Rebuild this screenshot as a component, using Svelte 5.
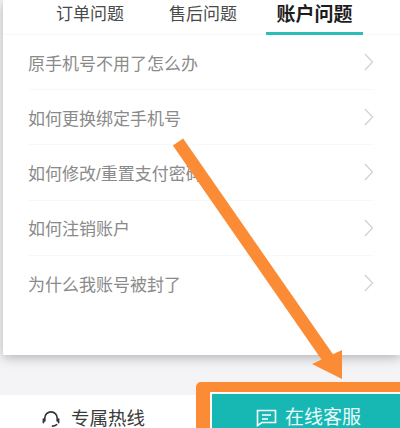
<script>
  const tabs = ['订单问题', '售后问题', '账户问题'];
  const rows = ['原手机号不用了怎么办', '如何更换绑定手机号', '如何修改/重置支付密码', '如何注销账户', '为什么我账号被封了'];
</script>

<div class="page">
  <div class="card">
    <div class="tabs">
      {#each tabs as t, i}
        <div class="tab" class:active={i === 2}>{t}</div>
      {/each}
    </div>
    {#each rows as r}
      <div class="row">
        <span>{r}</span>
        <svg width="10" height="18" viewBox="0 0 10 18"><path d="M1 1l7.500 8L1 17" fill="none" stroke="#d2d2d2" stroke-width="1.300"/></svg>
      </div>
    {/each}
  </div>
  <div class="bar">
    <div class="hotline">
      <svg width="20" height="18" viewBox="0 0 21 18"><path d="M4 11V8a6.500 6.500 0 0 1 13 0v3M2.500 9v4M18.500 9v4M16.500 15q-2 1.500-4.500 1.500" fill="none" stroke="#333" stroke-width="1.700" stroke-linecap="round"/></svg>
      <span>专属热线</span>
    </div>
    <div class="highlight">
      <div class="online">
        <svg width="21" height="18" viewBox="0 0 21 18"><path d="M1.500 1.500h18v12H6l-4.500 3zM6 6h9M6 10h6" fill="none" stroke="#fff" stroke-width="1.600"/></svg>
        <span>在线客服</span>
      </div>
    </div>
  </div>
  <svg class="arrow" width="400" height="428" viewBox="0 0 400 428">
    <path d="M178 142L328 358" stroke="#fb8c35" stroke-width="12.500" fill="none"/>
    <path d="M342 350L342 379L312 364z" fill="#fb8c35"/>
  </svg>
</div>

<style>
  :global(body) { margin: 0; }
  .page {
    position: relative;
    width: 400px;
    height: 428px;
    overflow: hidden;
    background: #f4f4f6;
    font-family: "Liberation Sans", "Noto Sans CJK SC", sans-serif;
  }
  .card {
    margin-left: 3px;
    height: 355px;
    background: #fff;
    box-shadow: 0 3px 10px rgba(90, 90, 100, 0.4);
  }
  .tabs {
    display: flex;
    height: 35px;
    padding-left: 53px;
    gap: 46px;
    border-bottom: 1px solid #f8f8f8;
    box-sizing: border-box;
  }
  .tab {
    width: 67px;
    font-size: 17px;
    line-height: 29px;
    color: #4a4a4a;
    text-align: center;
    white-space: nowrap;
  }
  .tab.active {
    width: 97px;
    margin-left: -16px;
    font-size: 19px;
    font-weight: 700;
    color: #1c1c1c;
    border-bottom: 3px solid #2dbdb9;
    height: 35px;
    box-sizing: border-box;
  }
  .row {
    height: 55.2px;
    margin: 0 26px 0 25px;
    display: flex;
    align-items: center;
    justify-content: space-between;
    border-bottom: 1px solid #f8f8f8;
    box-sizing: border-box;
    font-size: 17px;
    color: #8a8a8a;
  }
  .row:last-child { border-bottom: 0; }
  .bar {
    position: absolute;
    left: 0;
    right: 0;
    top: 395px;
    height: 33px;
    background: #fff;
    display: flex;
  }
  .hotline {
    width: 186px;
    display: flex;
    align-items: flex-start;
    justify-content: center;
    gap: 10px;
    font-size: 18.500px;
    line-height: 18px;
    color: #3a3a3a;
    padding-top: 15px;
    box-sizing: border-box;
  }
  .highlight {
    position: absolute;
    left: 196px;
    top: -13px;
    width: 230px;
    height: 60px;
    border: 10px solid #fb8c35;
    border-left-width: 14px;
    border-radius: 5px;
    box-sizing: border-box;
    background: #fff;
    padding: 2px 0 0 2px;
  }
  .online {
    height: 100%;
    background: #17b8b4;
    color: #eafafa;
    display: flex;
    align-items: flex-start;
    gap: 8px;
    font-size: 19px;
    line-height: 18px;
    padding: 15px 0 0 44px;
    box-sizing: border-box;
  }
  .arrow {
    position: absolute;
    left: 0;
    top: 0;
    pointer-events: none;
  }
</style>
